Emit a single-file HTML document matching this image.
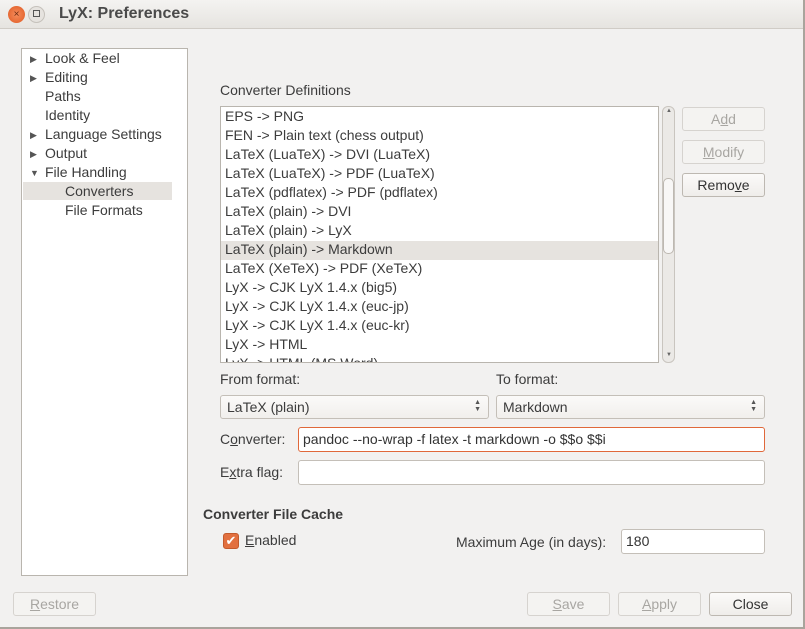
<!DOCTYPE html>
<html><head><meta charset="utf-8"><style>
*{box-sizing:border-box;margin:0;padding:0}
body{width:805px;height:629px;overflow:hidden;background:#f2f1f0;font-family:"Liberation Sans",sans-serif;font-size:14px;color:#3c3c3c;position:relative}
.a{position:absolute;white-space:nowrap}
.title{left:0;top:0;width:805px;height:29px;background:linear-gradient(#f4f3f1,#e6e4e0);border-bottom:1px solid #d0ccc6}
.box{background:#fff;border:1px solid #b9b5ae}
.btn{border:1px solid #bdb8b1;border-radius:3px;background:linear-gradient(#fbfaf9,#efedea);text-align:center;line-height:22px}
.dis{color:#a8a6a2;border-color:#d6d3cf;background:#f4f3f1}
.combo{border:1px solid #c4bfb8;border-radius:3px;background:linear-gradient(#fbfaf9,#f1efec);line-height:22px;padding-left:6px}
.arr{position:absolute;right:7px;top:3px;font-size:7px;line-height:7px;color:#555}
u{text-decoration:underline}
</style></head><body>
<div class="a title"></div>
<div class="a" style="left:8px;top:6px;width:17px;height:17px;border-radius:50%;background:radial-gradient(#f58c5c,#e05a22);color:#6b2a10;font-size:10px;text-align:center;line-height:17px">×</div>
<div class="a" style="left:28px;top:6px;width:17px;height:17px;border-radius:50%;background:#e6e3df;border:1px solid #c5c1bb"></div>
<div class="a" style="left:33px;top:10px;width:7px;height:7px;border:1px solid #555"></div>
<div class="a" style="left:59px;top:5px;font-weight:bold;font-size:16px;color:#4a4a4a">LyX: Preferences</div>

<div class="a box" style="left:21px;top:48px;width:167px;height:528px"></div>
<div class="a" style="left:23px;top:182px;width:149px;height:18px;background:#e6e3df"></div>
<div class="a" style="left:30px;top:50px;font-size:9px;color:#555;line-height:19px">▶<br>▶<br>&nbsp;<br>&nbsp;<br>▶<br>▶<br>▼</div>
<div class="a" style="left:45px;top:49px;line-height:19px">Look &amp; Feel<br>Editing<br>Paths<br>Identity<br>Language Settings<br>Output<br>File Handling</div>
<div class="a" style="left:65px;top:182px;line-height:19px">Converters<br>File Formats</div>

<div class="a" style="left:220px;top:82px">Converter Definitions</div>
<div class="a box" style="left:220px;top:106px;width:439px;height:257px;overflow:hidden">
<div class="a" style="left:0;top:134px;width:437px;height:19px;background:#e6e3df"></div>
<div class="a" style="left:4px;top:0px;line-height:19px">EPS -&gt; PNG<br>FEN -&gt; Plain text (chess output)<br>LaTeX (LuaTeX) -&gt; DVI (LuaTeX)<br>LaTeX (LuaTeX) -&gt; PDF (LuaTeX)<br>LaTeX (pdflatex) -&gt; PDF (pdflatex)<br>LaTeX (plain) -&gt; DVI<br>LaTeX (plain) -&gt; LyX<br>LaTeX (plain) -&gt; Markdown<br>LaTeX (XeTeX) -&gt; PDF (XeTeX)<br>LyX -&gt; CJK LyX 1.4.x (big5)<br>LyX -&gt; CJK LyX 1.4.x (euc-jp)<br>LyX -&gt; CJK LyX 1.4.x (euc-kr)<br>LyX -&gt; HTML<br>LyX -&gt; HTML (MS Word)</div>
</div>
<div class="a" style="left:662px;top:106px;width:13px;height:257px;border:1px solid #c9c5bf;border-radius:6px;background:#ebe9e6"></div>
<div class="a" style="left:663px;top:178px;width:11px;height:76px;border:1px solid #bdb8b1;border-radius:5px;background:#f8f7f6"></div>
<div class="a" style="left:666px;top:108px;font-size:6px;color:#666">▲</div>
<div class="a" style="left:666px;top:352px;font-size:6px;color:#666">▼</div>

<div class="a btn dis" style="left:682px;top:107px;width:83px;height:24px">A<u>d</u>d</div>
<div class="a btn dis" style="left:682px;top:140px;width:83px;height:24px"><u>M</u>odify</div>
<div class="a btn" style="left:682px;top:173px;width:83px;height:24px;color:#333">Remo<u>v</u>e</div>

<div class="a" style="left:220px;top:371px">From format:</div>
<div class="a" style="left:496px;top:371px">To format:</div>
<div class="a combo" style="left:220px;top:395px;width:269px;height:24px">LaTeX (plain)<span class="arr">▲<br>▼</span></div>
<div class="a combo" style="left:496px;top:395px;width:269px;height:24px">Markdown<span class="arr">▲<br>▼</span></div>

<div class="a" style="left:220px;top:431px">C<u>o</u>nverter:</div>
<div class="a" style="left:298px;top:427px;width:467px;height:25px;border:1px solid #e0683a;border-radius:3px;background:#fff;padding-left:4px;line-height:23px;color:#333">pandoc --no-wrap -f latex -t markdown -o $$o $$i</div>
<div class="a" style="left:220px;top:464px">E<u>x</u>tra flag:</div>
<div class="a" style="left:298px;top:460px;width:467px;height:25px;border:1px solid #c4bfb8;border-radius:3px;background:#fff"></div>

<div class="a" style="left:203px;top:506px;font-weight:bold">Converter File Cache</div>
<div class="a" style="left:223px;top:533px;width:16px;height:16px;border-radius:3px;background:#e2703f;border:1px solid #c35a2c;color:#fff;font-size:13px;line-height:14px;text-align:center">✔</div>
<div class="a" style="left:245px;top:532px"><u>E</u>nabled</div>
<div class="a" style="left:456px;top:534px">Maximum A<u>g</u>e (in days):</div>
<div class="a" style="left:621px;top:529px;width:144px;height:25px;border:1px solid #c4bfb8;border-radius:3px;background:#fff;padding-left:4px;line-height:23px;color:#333">180</div>

<div class="a btn dis" style="left:13px;top:592px;width:83px;height:24px"><u>R</u>estore</div>
<div class="a btn dis" style="left:527px;top:592px;width:83px;height:24px"><u>S</u>ave</div>
<div class="a btn dis" style="left:618px;top:592px;width:83px;height:24px"><u>A</u>pply</div>
<div class="a btn" style="left:709px;top:592px;width:83px;height:24px;color:#333">Close</div>
<div class="a" style="left:0;top:627px;width:805px;height:2px;background:#a9a49c"></div>
<div class="a" style="left:803px;top:0;width:2px;height:629px;background:#a9a49c"></div>
</body></html>
